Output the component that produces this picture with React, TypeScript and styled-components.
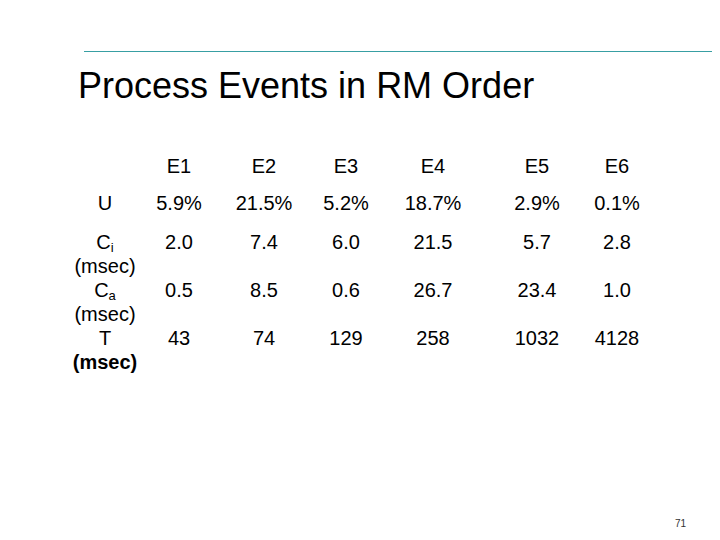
import React from "react";
import styled, { createGlobalStyle } from "styled-components";

const Global = createGlobalStyle`
  html, body { margin: 0; padding: 0; background: #ffffff; }
  body { font-family: "Liberation Sans", Arial, sans-serif; color: #000; }
`;

const Page = styled.div`
  width: 720px;
  height: 540px;
  display: flex;
  flex-direction: column;
  box-sizing: border-box;
  padding-top: 51px;
  overflow: hidden;
`;

const Rule = styled.div`
  margin-left: 84px;
  width: 628px;
  height: 1px;
  background: #389fa3;
`;

const Title = styled.h1`
  margin: 13px 0 0 78px;
  font-size: 36px;
  line-height: 42px;
  font-weight: normal;
`;

const Table = styled.div`
  margin: 47px 0 0 70px;
  display: flex;
  flex-direction: column;
  font-size: 20px;
  line-height: 24px;
`;

const Row = styled.div<{ $gap: number }>`
  display: grid;
  grid-template-columns: 70px 78px 92px 72px 102px 106px 54px;
  margin-top: ${(p) => p.$gap}px;
`;

const Cell = styled.div`
  text-align: center;
  white-space: nowrap;
`;

const Label = styled.div<{ $bold?: boolean }>`
  text-align: center;
  white-space: nowrap;
  font-weight: ${(p) => (p.$bold ? "bold" : "normal")};
`;

const Sub = styled.span`
  font-size: 13px;
  line-height: 0;
  vertical-align: -3px;
`;

const Footer = styled.div`
  margin-top: auto;
  padding: 0 0 10px 675px;
  font-size: 10px;
  line-height: 12px;
  color: #333;
`;

type RowData = {
  gap: number;
  label: React.ReactNode;
  unit?: string;
  boldUnit?: boolean;
  values: string[];
};

const rows: RowData[] = [
  { gap: 0, label: "", values: ["E1", "E2", "E3", "E4", "E5", "E6"] },
  { gap: 13, label: "U", values: ["5.9%", "21.5%", "5.2%", "18.7%", "2.9%", "0.1%"] },
  {
    gap: 15,
    label: (
      <>
        C<Sub>i</Sub>
      </>
    ),
    unit: "(msec)",
    values: ["2.0", "7.4", "6.0", "21.5", "5.7", "2.8"],
  },
  {
    gap: 0,
    label: (
      <>
        C<Sub>a</Sub>
      </>
    ),
    unit: "(msec)",
    values: ["0.5", "8.5", "0.6", "26.7", "23.4", "1.0"],
  },
  {
    gap: 0,
    label: "T",
    unit: "(msec)",
    boldUnit: true,
    values: ["43", "74", "129", "258", "1032", "4128"],
  },
];

export default function App() {
  return (
    <>
      <Global />
      <Page>
        <Rule />
        <Title>Process Events in RM Order</Title>
        <Table>
          {rows.map((r, i) => (
            <Row key={i} $gap={r.gap}>
              <Cell>
                <Label>{r.label}</Label>
                {r.unit && <Label $bold={r.boldUnit}>{r.unit}</Label>}
              </Cell>
              {r.values.map((v, j) => (
                <Cell key={j}>{v}</Cell>
              ))}
            </Row>
          ))}
        </Table>
        <Footer>71</Footer>
      </Page>
    </>
  );
}
